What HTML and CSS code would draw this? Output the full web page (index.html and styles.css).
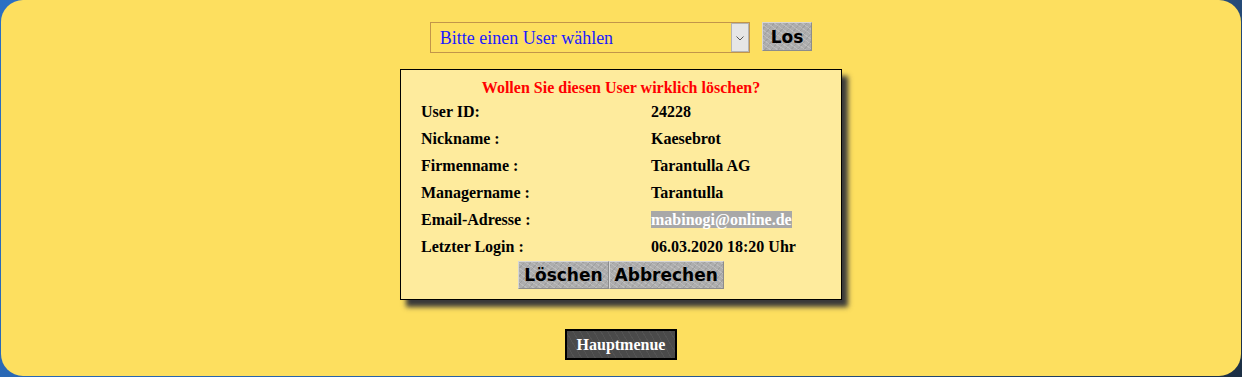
FILE: index.html
```html
<!DOCTYPE html>
<html lang="de">
<head>
    <meta charset="UTF-8">
    <title>User löschen</title>
    <link rel="stylesheet" href="styles.css">
</head>
<body>
    <div class="panel">
        <form class="chooser">
            <div class="select-wrap">
                <select class="user-select">
                    <option>Bitte einen User wählen</option>
                </select>
            </div>
            <button type="button" class="tex-button go">Los</button>
        </form>

        <div class="dialog">
            <div class="dialog-title">Wollen Sie diesen User wirklich löschen?</div>
            <table class="details">
                <tr><td>User ID:</td><td>24228</td></tr>
                <tr><td>Nickname :</td><td>Kaesebrot</td></tr>
                <tr><td>Firmenname :</td><td>Tarantulla AG</td></tr>
                <tr><td>Managername :</td><td>Tarantulla</td></tr>
                <tr><td>Email-Adresse :</td><td><span class="marked">mabinogi@online.de</span></td></tr>
                <tr><td>Letzter Login :</td><td>06.03.2020 18:20 Uhr</td></tr>
            </table>
            <div class="actions">
                <button type="button" class="tex-button">Löschen</button><button type="button" class="tex-button">Abbrechen</button>
            </div>
        </div>

        <div class="menu-row">
            <button type="button" class="menu-button">Hauptmenue</button>
        </div>
    </div>
</body>
</html>
```

FILE: styles.css
```css
body {
    margin: 0;
    height: 377px;
    background: linear-gradient(135deg, #2a6fc4 0%, #2a5e9e 60%, #1c2f44 100%);
    font-family: "Liberation Serif", serif;
}

.panel {
    margin: 0 1px;
    height: 376px;
    box-sizing: border-box;
    padding-top: 22px;
    background-color: #fddf5f;
    border-radius: 22px;
}

.chooser {
    display: flex;
    justify-content: center;
    gap: 12px;
    margin: 0;
}

.select-wrap {
    position: relative;
    width: 320px;
    height: 31px;
}

/* the little grey arrow box on the right */
.select-wrap::after {
    content: "";
    position: absolute;
    top: 1px;
    right: 1px;
    width: 16px;
    height: 27px;
    background-color: #e6e6e6;
    border: 1px solid #b4b4b4;
    background-image: url("data:image/svg+xml;utf8,<svg xmlns='http://www.w3.org/2000/svg' width='8' height='5'><path d='M0.5 0.5 L4 4 L7.5 0.5' fill='none' stroke='%23555' stroke-width='1'/></svg>");
    background-repeat: no-repeat;
    background-position: center 12px;
    pointer-events: none;
}

.user-select {
    appearance: none;
    width: 100%;
    height: 100%;
    padding-left: 9px;
    font-family: "Liberation Serif", serif;
    font-size: 18px;
    color: #1a1aff;
    background-color: #fddf5f;
    border: 1px solid #c2954a;
    border-radius: 0;
}

.tex-button {
    height: 29px;
    padding: 0 6px;
    font-family: "DejaVu Sans", Verdana, sans-serif;
    font-size: 17px;
    font-weight: bold;
    color: #000;
    background-color: #adadad;
    background-image:
        repeating-linear-gradient(35deg, rgba(255,255,255,0.18) 0 1px, transparent 1px 4px),
        repeating-linear-gradient(-50deg, rgba(0,0,0,0.08) 0 1px, transparent 1px 5px);
    border: 1px solid;
    border-color: #d6d6d6 #8c8c8c #8c8c8c #d6d6d6;
    border-radius: 0;
}

.go {
    padding: 0 8px;
}

.dialog {
    width: 440px;
    margin: 16px auto 0;
    padding: 8px 0 10px;
    background-color: #feeb9d;
    border: 1px solid #000;
    box-shadow: 6px 7px 5px #3a3a3a;
    font-weight: bold;
    font-size: 16px;
}

.dialog-title {
    text-align: center;
    color: #ff0000;
    line-height: 20px;
}

.details {
    border-collapse: collapse;
    margin-left: 20px;
}

.details td {
    height: 27px;
    padding: 0;
    vertical-align: middle;
}

.details td:first-child {
    width: 230px;
}

.marked {
    background-color: #a8a8a8;
    color: #fff;
}

.actions {
    display: flex;
    justify-content: center;
    margin-top: 1px;
}

.actions .tex-button {
    height: 28px;
    padding: 0 5px;
}

.menu-row {
    display: flex;
    justify-content: center;
    margin-top: 29px;
}

.menu-button {
    width: 112px;
    height: 31px;
    font-family: "Liberation Serif", serif;
    font-size: 16px;
    font-weight: bold;
    color: #fff;
    background-color: #4a4a4a;
    background-image: repeating-linear-gradient(60deg, rgba(255,255,255,0.05) 0 1px, transparent 1px 6px);
    border: 2px solid #000;
}
```
